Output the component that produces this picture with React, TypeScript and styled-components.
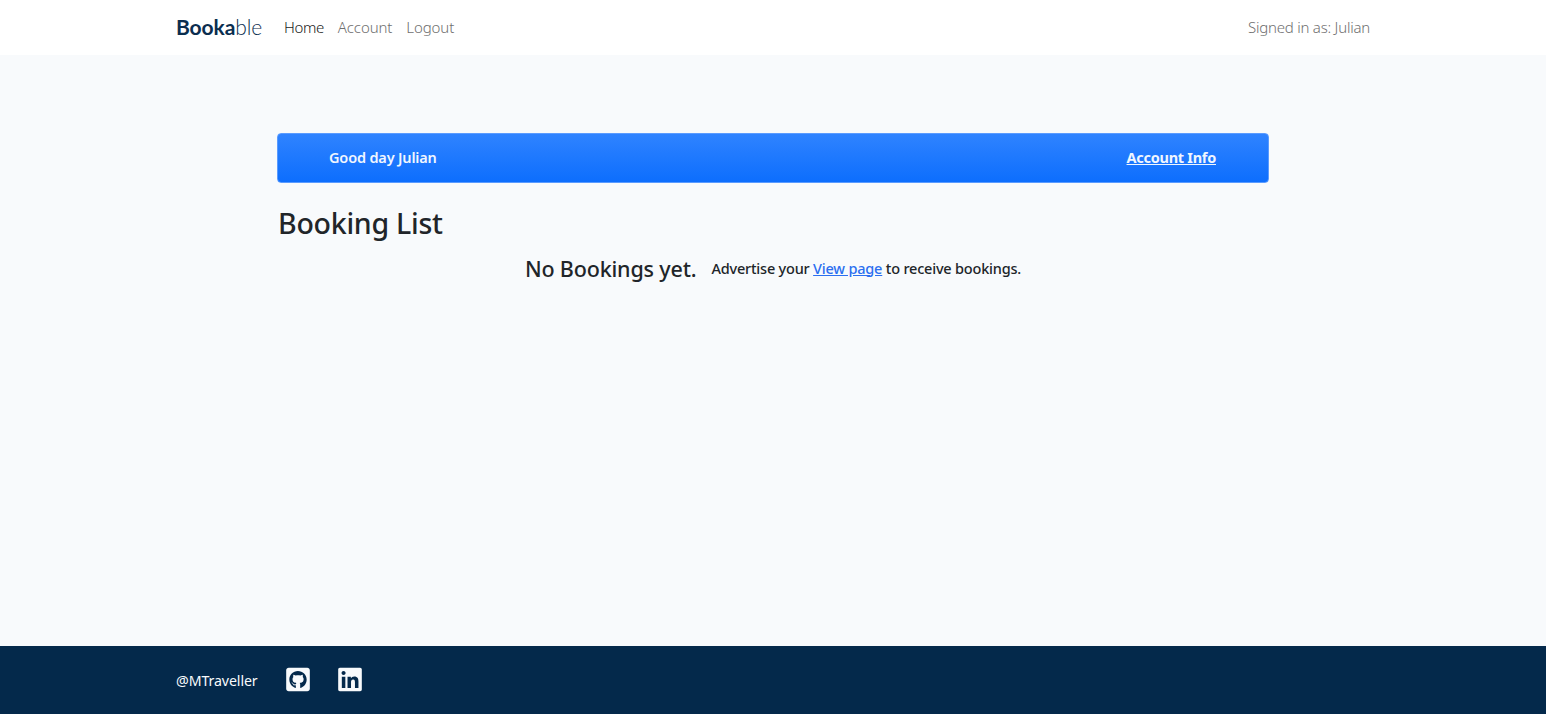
import React from "react";
import styled, { createGlobalStyle } from "styled-components";
import { FaGithubSquare, FaLinkedin } from "react-icons/fa";

const GlobalStyle = createGlobalStyle`
  *, *::before, *::after { box-sizing: border-box; }
  body {
    margin: 0;
    background: #f8fafc;
    color: #212529;
    font-family: "Segoe UI", "Noto Sans", "Open Sans", sans-serif;
    font-size: 14.5px;
    line-height: 22px;
  }
`;

const Page = styled.div`
  display: flex;
  flex-direction: column;
  min-height: 100vh;
`;

const Header = styled.header`
  height: 55px;
  background: #fff;
`;

const Container = styled.div`
  display: flex;
  align-items: center;
  width: 1194px;
  height: 100%;
  margin: 0 auto;
`;

const Brand = styled.a`
  width: 107px;
  padding-bottom: 1px;
  color: #0b2e4f;
  font-family: Lato, sans-serif;
  font-size: 21px;
  font-weight: 700;
  line-height: 28px;
  letter-spacing: -0.1px;
  text-decoration: none;
`;

const BrandLight = styled.span`
  font-weight: 300;
`;

const Nav = styled.nav`
  display: flex;
  flex: 1;
  gap: 14px;
  padding-bottom: 1px;
`;

const NavLink = styled.a<{ $active?: boolean }>`
  color: ${({ $active }) => ($active ? "#1a1a1a" : "#6f6f6f")};
  font-size: 15px;
  font-weight: 300;
  letter-spacing: -0.1px;
  text-decoration: none;

  &:first-child {
    padding-left: 1px;
    letter-spacing: -0.4px;
  }
`;

const SignedIn = styled.span`
  padding-bottom: 1px;
  color: #6f6f6f;
  font-size: 15px;
  font-weight: 300;
  letter-spacing: -0.22px;
`;

const Main = styled.main`
  flex: 1;
  width: 992px;
  margin: 0 auto;
  padding-top: 78px;
`;

const Welcome = styled.section`
  display: flex;
  align-items: center;
  justify-content: space-between;
  height: 50px;
  margin-top: -0.5px;
  padding: 0 52px 2px 51px;
  border: 1px solid #5a9bff;
  border-radius: 4px;
  background: linear-gradient(#2f83ff, #0d6efd);
  color: #f0f6ff;
  font-weight: 600;
  letter-spacing: -0.17px;
`;

const AccountLink = styled.a`
  color: #f0f6ff;
  font-weight: 700;
  letter-spacing: -0.27px;
  text-underline-offset: 1px;
`;

const Title = styled.h1`
  margin: 22px 0 0 1px;
  font-size: 28.5px;
  font-weight: 500;
  line-height: 36px;
  letter-spacing: -0.25px;
`;

const EmptyState = styled.div`
  display: flex;
  align-items: center;
  justify-content: center;
  gap: 15px;
  margin-top: 14px;
`;

const EmptyTitle = styled.h2`
  margin: 0;
  font-size: 21.5px;
  font-weight: 500;
  line-height: 28px;
  letter-spacing: -0.17px;
`;

const EmptyText = styled.p`
  margin: 0;
  padding-bottom: 2px;
  font-weight: 500;
  letter-spacing: -0.2px;
`;

const ViewLink = styled.a`
  color: #2b6ff0;
  text-underline-offset: 1px;
`;

const Footer = styled.footer`
  height: 68px;
  background: #04294b;
  color: #f8fafc;
`;

const Handle = styled.span`
  width: 110px;
  padding-top: 1px;
  font-size: 14.2px;
  letter-spacing: -0.1px;
`;

const SocialLink = styled.a`
  display: flex;
  width: 24px;
  margin-right: 28px;
  padding-bottom: 2px;
  color: #f8fafc;
`;

export default function App() {
  return (
    <Page>
      <GlobalStyle />
      <Header>
        <Container>
          <Brand>Booka<BrandLight>ble</BrandLight></Brand>
          <Nav>
            <NavLink $active>Home</NavLink>
            <NavLink>Account</NavLink>
            <NavLink>Logout</NavLink>
          </Nav>
          <SignedIn>Signed in as: Julian</SignedIn>
        </Container>
      </Header>
      <Main>
        <Welcome>
          <span>Good day Julian</span>
          <AccountLink href="#">Account Info</AccountLink>
        </Welcome>
        <Title>Booking List</Title>
        <EmptyState>
          <EmptyTitle>No Bookings yet.</EmptyTitle>
          <EmptyText>
            Advertise your <ViewLink href="#">View page</ViewLink> to receive bookings.
          </EmptyText>
        </EmptyState>
      </Main>
      <Footer>
        <Container>
          <Handle>@MTraveller</Handle>
          <SocialLink href="#" aria-label="GitHub"><FaGithubSquare size={27} /></SocialLink>
          <SocialLink href="#" aria-label="LinkedIn"><FaLinkedin size={27} /></SocialLink>
        </Container>
      </Footer>
    </Page>
  );
}
